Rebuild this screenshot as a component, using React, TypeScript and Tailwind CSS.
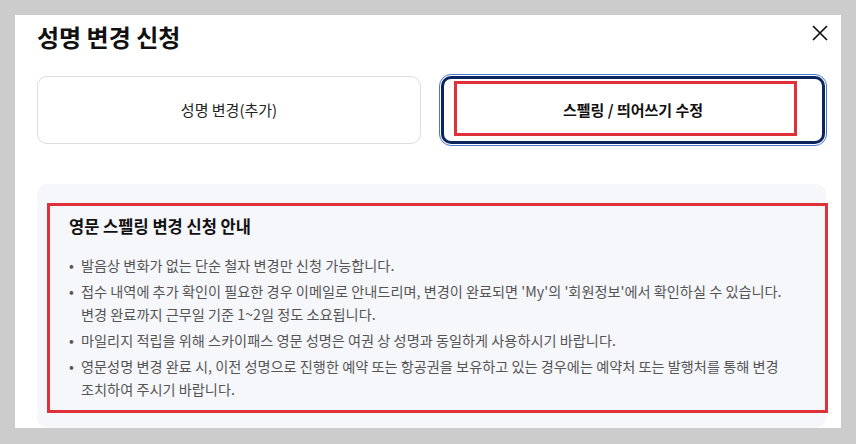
const notes: string[][] = [
  ["발음상 변화가 없는 단순 철자 변경만 신청 가능합니다."],
  [
    "접수 내역에 추가 확인이 필요한 경우 이메일로 안내드리며, 변경이 완료되면 'My'의 '회원정보'에서 확인하실 수 있습니다.",
    "변경 완료까지 근무일 기준 1~2일 정도 소요됩니다.",
  ],
  ["마일리지 적립을 위해 스카이패스 영문 성명은 여권 상 성명과 동일하게 사용하시기 바랍니다."],
  [
    "영문성명 변경 완료 시, 이전 성명으로 진행한 예약 또는 항공권을 보유하고 있는 경우에는 예약처 또는 발행처를 통해 변경",
    "조치하여 주시기 바랍니다.",
  ],
];

export default function App() {
  return (
    <div
      className="w-[856px] h-[444px] bg-[#cccccc] pt-[15px] pl-[15px] overflow-hidden"
      style={{ fontFamily: '"Noto Sans CJK KR", "Noto Sans", sans-serif' }}
    >
      <div className="w-[826px] h-[413px] bg-white overflow-hidden pl-[22px] pr-[15px] relative">
        <h1 className="text-[24px] leading-[32px] font-bold text-[#111] pt-[6px]">성명 변경 신청</h1>
        <button className="absolute right-[13px] top-[10px] w-[16px] h-[16px]">
          <svg viewBox="0 0 16 16" width="16" height="16" fill="none" stroke="#111" strokeWidth="1.7">
            <path d="M1 1 L15 15 M15 1 L1 15" />
          </svg>
        </button>

        <div className="flex gap-[20px] mt-[23px]">
          <div className="w-[384px] h-[68px] rounded-[10px] border border-[#dcdcdc] flex items-center justify-center text-[15px] text-[#222]">
            성명 변경(추가)
          </div>
          <div className="relative w-[384px] h-[68px] rounded-[10px] border-[3px] border-[#0b2560] outline-1 outline-offset-1 outline-[#4a78c8] flex items-center justify-center text-[15px] font-bold text-[#111]">
            스펠링 / 띄어쓰기 수정
            <div className="absolute left-[10px] top-[2px] w-[343px] h-[55px] border-[3px] border-[#e0303a]" />
          </div>
        </div>

        <div className="relative mt-[40px] w-[789px] h-[244px] rounded-[10px] bg-[#f6f7fb] pl-[32px] pt-[31px]">
          <h2 className="text-[16.5px] leading-[22px] font-bold text-[#111]">영문 스펠링 변경 신청 안내</h2>
          <ul className="mt-[17px] flex flex-col gap-[3px] text-[14.2px] leading-[23px] text-[#555]">
            {notes.map((lines, i) => (
              <li key={i} className="flex">
                <span className="w-[12px] shrink-0">•</span>
                <span className="whitespace-nowrap">
                  {lines.map((l, j) => (
                    <span key={j} className="block">
                      {l}
                    </span>
                  ))}
                </span>
              </li>
            ))}
          </ul>
          <div className="absolute left-[10px] top-[19px] w-[781px] h-[210px] border-[3px] border-[#e0303a]" />
        </div>
      </div>
    </div>
  );
}
